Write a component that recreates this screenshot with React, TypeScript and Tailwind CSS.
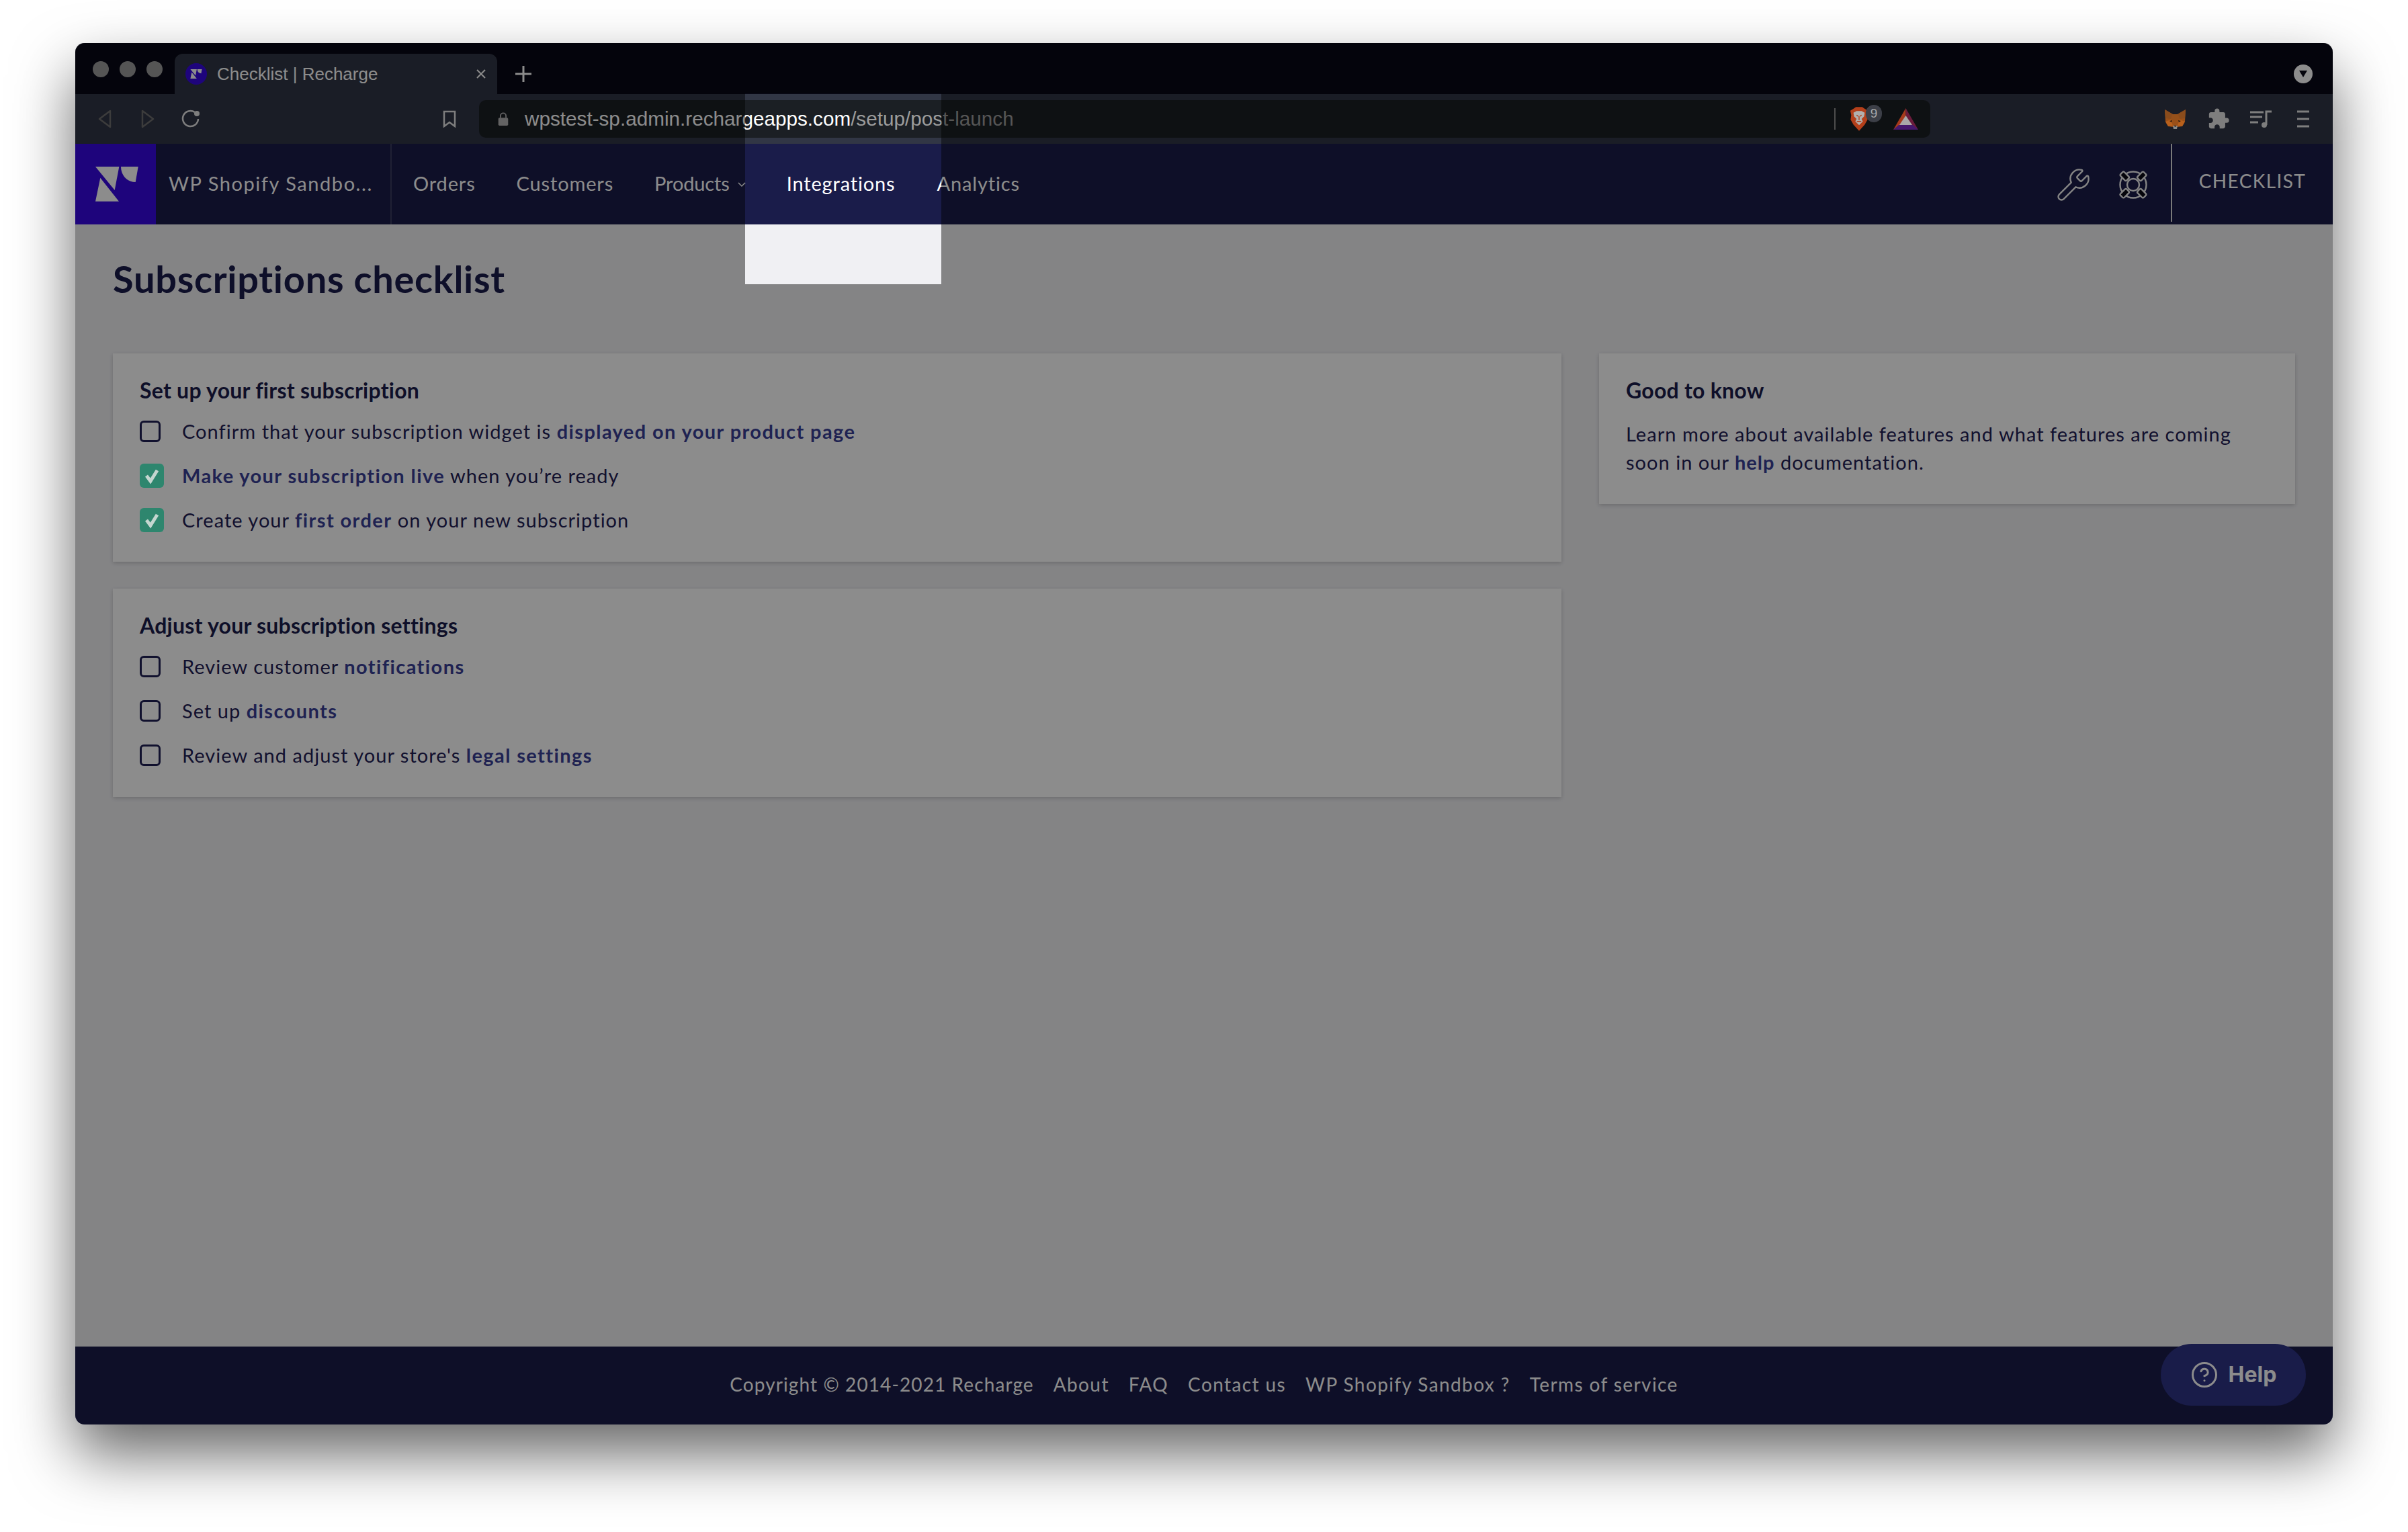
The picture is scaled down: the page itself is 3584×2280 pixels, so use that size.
import { CircleHelp, Wrench } from "lucide-react";
import { MdExtension } from "react-icons/md";

function Logo({ className }: { className: string }) {
  return (
    <svg viewBox="0 0 64 52" className={className} fill="#ffffff">
      <polygon points="0,0 35.3,0 28.7,35" />
      <polygon points="7.3,16.7 35,51.7 0,51.7" />
      <path d="M38 0H63.7L59.7 23C47 23 38 13 38 0Z" />
    </svg>
  );
}

function Lifebuoy() {
  return (
    <svg viewBox="0 0 44 44" className="h-[44px] w-[44px]" fill="none" stroke="#f0f0f0" strokeWidth="2.4">
      <circle cx="22" cy="22" r="19.500" />
      <circle cx="22" cy="22" r="9" />
      {[45, 135, 225, 315].map((a) => (
        <rect key={a} x="18" y="-2.500" width="8" height="13" rx="2" fill="#0a0a14" transform={`rotate(${a} 22 22)`} />
      ))}
    </svg>
  );
}

function Fox() {
  return (
    <svg viewBox="0 0 31 29" className="h-[29px] w-[31px]">
      <polygon points="0,0 12,7 19,7 31,0 30,18 26,25 19,26 12,26 5,25 1,18" fill="#9a5018" />
      <polygon points="0,0 12,7 9,14 1,13" fill="#8a4c1c" />
      <polygon points="31,0 19,7 22,14 30,13" fill="#8a4c1c" />
      <polygon points="9,14 15.5,17 22,14 20,7 11,7" fill="#95501a" />
      <polygon points="1,18 9,15 12,24 5,25" fill="#b8601c" />
      <polygon points="30,18 22,15 19,24 26,25" fill="#b8601c" />
      <polygon points="7,17 11,16 10,19" fill="#2a1a10" />
      <polygon points="24,17 20,16 21,19" fill="#2a1a10" />
      <polygon points="12,24 19,24 18,29 13,29" fill="#8a8a88" />
      <polygon points="13.5,24 17.5,24 15.5,26" fill="#1f1a18" />
    </svg>
  );
}

function Brave() {
  return (
    <svg viewBox="0 0 30 38" className="h-[36px] w-[28px]">
      <path d="M7 2L10 0H20L23 2L29 6L27.500 13L28.500 20L24 28L15 38L6 28L1.500 20L2.500 13L1 6Z" fill="#b33f1a" />
      <path d="M6 9L11 6.500H19L24 9L23 15L19 19L21 23L15 29L9 23L11 19L7 15Z" fill="#b2b0ae" />
      <path d="M11 13L14 15M19 13L16 15M15 15V21M11.500 23H18.500" stroke="#b33f1a" strokeWidth="1.500" fill="none" />
    </svg>
  );
}

function Bat() {
  return (
    <svg viewBox="0 0 37 32" className="h-[32px] w-[37px]">
      <polygon points="18.500,0 0,32 11,26 18.500,12" fill="#a63a1c" />
      <polygon points="18.500,0 37,32 26,26 18.500,12" fill="#6b1c3c" />
      <polygon points="0,32 37,32 29,25 8,25" fill="#46196e" />
      <polygon points="18.500,11 28,25 9,25" fill="#a9a9a9" />
    </svg>
  );
}

function Box({ checked }: { checked?: boolean }) {
  if (checked) {
    return (
      <span className="flex h-[36px] w-[36px] shrink-0 items-center justify-center rounded-[6px] bg-[#54f5c9]">
        <svg viewBox="0 0 24 24" className="relative z-20 h-[26px] w-[24px]" fill="none" stroke="#c4d6d0" strokeWidth="5">
          <path d="M4 12L10 20L20 4" />
        </svg>
      </span>
    );
  }
  return <span className="mr-[5px] h-[32px] w-[31px] shrink-0 rounded-[6px] border-[3px] border-[#1f2055]" />;
}

function Row({ checked, children }: { checked?: boolean; children: React.ReactNode }) {
  return (
    <div className="flex h-[66px] items-center gap-[27px]">
      <Box checked={checked} />
      <span className="text-[29px] tracking-[1.03px] text-[#1f2055]">{children}</span>
    </div>
  );
}

function L({ children }: { children: React.ReactNode }) {
  return <a className="font-bold tracking-[1.4px] text-[#3a3f96]">{children}</a>;
}

function Card({ title, children }: { title: string; children: React.ReactNode }) {
  return (
    <section className="bg-white px-[40px] pb-[29px] pt-[36px] shadow-[0_2px_6px_rgba(0,0,0,0.18)]">
      <h2 className="mb-[9px] h-[38px] text-[32px] font-bold leading-[37px] tracking-[0.25px] text-[#1b1c4b]">{title}</h2>
      {children}
    </section>
  );
}

export default function App() {
  const navItems = ["Orders", "Customers"];
  return (
    <div className="h-[2280px] w-[3584px] bg-white pl-[112px] pt-[64px] [font-family:Lato,sans-serif]">
      <div className="relative flex h-[2056px] w-[3360px] flex-col overflow-hidden rounded-[14px] bg-[#f0f0f3] shadow-[0_44px_90px_rgba(0,0,0,0.6)]">
        {/* tab strip */}
        <div className="flex h-[76px] shrink-0 items-end bg-[#090916] pr-[30px] [font-family:'Liberation_Sans',sans-serif]">
          <div className="mb-[25px] ml-[26px] flex gap-[16px]">
            <span className="h-[24px] w-[24px] rounded-full bg-[#9c9c9c]" />
            <span className="h-[24px] w-[24px] rounded-full bg-[#9c9c9c]" />
            <span className="h-[24px] w-[24px] rounded-full bg-[#9c9c9c]" />
          </div>
          <div className="ml-[18px] flex h-[60px] w-[480px] items-center rounded-t-[12px] bg-[#313645] pl-[16px] pr-[16px]">
            <span className="flex h-[32px] w-[32px] items-center justify-center rounded-full bg-[#3809e2]">
              <Logo className="h-[14px] w-[18px]" />
            </span>
            <span className="ml-[15px] flex-1 text-[26px] text-white">Checklist | Recharge</span>
            <svg viewBox="0 0 16 16" className="h-[16px] w-[16px]" stroke="#ffffff" strokeWidth="2">
              <path d="M2 2L14 14M14 2L2 14" />
            </svg>
          </div>
          <svg viewBox="0 0 26 26" className="mb-[17px] ml-[26px] h-[26px] w-[26px]" stroke="#ffffff" strokeWidth="3">
            <path d="M13 1V25M1 13H25" />
          </svg>
          <span className="mb-[16px] ml-auto flex h-[28px] w-[28px] items-center justify-center rounded-full bg-[#ffffff]">
            <svg viewBox="0 0 12 10" className="h-[10px] w-[12px]" fill="#090916">
              <polygon points="0,0 12,0 6,10" />
            </svg>
          </span>
        </div>
        {/* toolbar */}
        <div className="flex h-[74px] shrink-0 items-center bg-[#313645] [font-family:'Liberation_Sans',sans-serif]">
          <svg viewBox="0 0 20 28" className="ml-[34px] h-[28px] w-[20px]" fill="none" stroke="#6e6e6e" strokeWidth="2.500" strokeLinejoin="round">
            <path d="M18 2V26L2 14Z" />
          </svg>
          <svg viewBox="0 0 20 28" className="ml-[44px] h-[28px] w-[20px]" fill="none" stroke="#6e6e6e" strokeWidth="2.500" strokeLinejoin="round">
            <path d="M2 2V26L18 14Z" />
          </svg>
          <svg viewBox="0 0 28 28" className="ml-[40px] h-[28px] w-[28px]" fill="none" stroke="#e6e6e6" strokeWidth="2.500">
            <path d="M25 14A11.500 11.500 0 1 1 20 4" />
            <circle cx="23" cy="6" r="4" fill="#e6e6e6" stroke="none" />
          </svg>
          <svg viewBox="0 0 20 26" className="ml-[361px] h-[26px] w-[20px]" fill="none" stroke="#e6e6e6" strokeWidth="2.500">
            <path d="M2 2H18V24L10 18L2 24Z" />
          </svg>
          <div className="ml-[34px] flex h-[56px] w-[2160px] items-center rounded-[10px] bg-[#1b1f24] pl-[28px]">
            <svg viewBox="0 0 16 22" className="h-[20px] w-[16px]" fill="#b5b5b5">
              <rect x="0" y="9" width="16" height="13" rx="2" />
              <path d="M3.500 9V6A4.500 4.500 0 0 1 12.500 6V9" fill="none" stroke="#b5b5b5" strokeWidth="2" />
            </svg>
            <span className="ml-[24px] whitespace-nowrap text-[29.7px] text-white">
              wpstest-sp.admin.rechargeapps.com<span className="text-[#9c9c9c]">/setup/post-launch</span>
            </span>
            <span className="ml-auto h-[32px] w-[2px] bg-[#8c8c8c]" />
            <span className="relative z-20 ml-[21px] flex items-center">
              <Brave />
              <span className="relative -top-[8px] -ml-[4px] flex h-[26px] w-[24px] items-center justify-center rounded-full bg-[#3c3f47] text-[19px] text-[#a8a8a8]">9</span>
            </span>
            <span className="relative z-20 ml-[17px] mr-[18px] flex">
              <Bat />
            </span>
          </div>
          <span className="relative z-20 ml-[349px] flex">
            <Fox />
          </span>
          <MdExtension className="ml-[32px] h-[34px] w-[34px] text-[#e6e6e6]" />
          <svg viewBox="0 0 32 26" className="ml-[30px] h-[26px] w-[32px]" fill="none" stroke="#e6e6e6" strokeWidth="3">
            <path d="M0 3H20M0 10H18M0 18H12M24 22V2H32" />
            <ellipse cx="21" cy="22" rx="4" ry="4" fill="#e6e6e6" stroke="none" />
          </svg>
          <svg viewBox="0 0 18 26" className="ml-[38px] h-[26px] w-[18px]" stroke="#e6e6e6" strokeWidth="3">
            <path d="M0 2H18M0 13H18M0 24H18" />
          </svg>
        </div>
        {/* app nav */}
        <header className="flex h-[120px] shrink-0 items-stretch bg-[#1a1c4a] text-white">
          <div className="flex w-[120px] items-center justify-center bg-[#3809e2] pl-[4px]">
            <Logo className="h-[52px] w-[64px]" />
          </div>
          <div className="flex w-[351px] items-center whitespace-nowrap border-r-2 border-[#3b3d62] pb-[3px] pl-[19px] text-[29px] tracking-[1.55px]">
            WP Shopify Sandbo...
          </div>
          <nav className="flex items-center gap-[61px] pb-[3px] pl-[32px] text-[29px] tracking-[0.85px]">
            {navItems.map((n) => (
              <span key={n}>{n}</span>
            ))}
            <span className="flex items-center gap-[12px] tracking-[-0.15px]">
              Products
              <svg viewBox="0 0 12 8" className="mt-[4px] h-[8px] w-[12px]" fill="none" stroke="#ffffff" strokeWidth="1.500">
                <path d="M1 1L6 6L11 1" />
              </svg>
            </span>
            <span>Integrations</span>
            <span className="ml-[1px]">Analytics</span>
          </nav>
          <div className="ml-auto mr-[34px] flex items-center gap-[40px] pt-[2px]">
            <Wrench className="h-[54px] w-[54px] text-[#f0f0f0]" strokeWidth={1.05} />
            <Lifebuoy />
          </div>
          <div className="mb-[4px] flex w-[241px] items-center justify-center border-l-2 border-[#dddddd] pb-[6px] text-[28px] tracking-[1.4px]">
            CHECKLIST
          </div>
        </header>
        {/* page content */}
        <main className="min-h-0 flex-1 px-[56px] pt-[46px]">
          <h1 className="mb-[76px] h-[70px] text-[56px] font-bold leading-[70px] tracking-[0.7px] text-[#1b1c4b]">Subscriptions checklist</h1>
          <div className="grid grid-cols-[2156px_1036px] gap-x-[56px]">
            <div className="flex flex-col gap-[40px]">
              <Card title="Set up your first subscription">
                <Row>
                  Confirm that your subscription widget is <L>displayed on your product page</L>
                </Row>
                <Row checked>
                  <L>Make your subscription live</L> when you’re ready
                </Row>
                <Row checked>
                  Create your <L>first order</L> on your new subscription
                </Row>
              </Card>
              <Card title="Adjust your subscription settings">
                <Row>
                  Review customer <L>notifications</L>
                </Row>
                <Row>
                  Set up <L>discounts</L>
                </Row>
                <Row>
                  Review and adjust your store's <L>legal settings</L>
                </Row>
              </Card>
            </div>
            <div>
              <section className="h-[224px] bg-white px-[40px] pt-[36px] shadow-[0_2px_6px_rgba(0,0,0,0.18)]">
                <h2 className="mb-[25px] h-[38px] text-[32px] font-bold leading-[37px] tracking-[0.25px] text-[#1b1c4b]">Good to know</h2>
                <p className="text-[29px] leading-[42px] tracking-[1.03px] text-[#1f2055]">
                  Learn more about available features and what features are coming soon in our <a className="font-bold text-[#3a3f96]">help</a> documentation.
                </p>
              </section>
            </div>
          </div>
        </main>
        {/* footer */}
        <footer className="flex h-[116px] shrink-0 items-center justify-center gap-[29px] bg-[#1a1c4a] pb-[4px] text-[28px] tracking-[1.4px] text-white">
          <span className="tracking-[1.1px]">Copyright © 2014-2021 Recharge</span>
          <span>About</span>
          <span>FAQ</span>
          <span>Contact us</span>
          <span>WP Shopify Sandbox ?</span>
          <span>Terms of service</span>
        </footer>
        {/* floating help button */}
        <button className="absolute bottom-[28px] right-[40px] flex h-[92px] w-[216px] items-center justify-center gap-[15px] rounded-full bg-[#2e3386] text-[32px] font-bold text-white [font-family:Inter,sans-serif]">
          <CircleHelp className="h-[42px] w-[42px]" strokeWidth={1.7} />
          Help
        </button>
        {/* spotlight cut-out with dimming */}
        <div className="pointer-events-none absolute left-[997px] top-[75px] z-10 h-[284px] w-[292px] shadow-[0_0_0_4000px_rgba(0,0,0,0.45)]" />
      </div>
    </div>
  );
}
